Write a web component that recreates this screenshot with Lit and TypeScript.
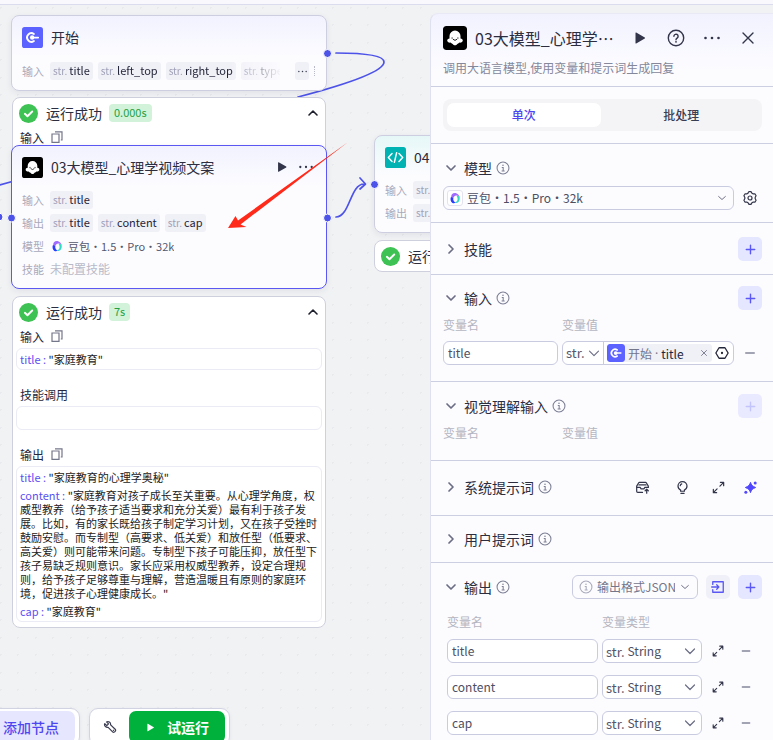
import { LitElement, html, svg, css, nothing } from "lit";
import { customElement, property } from "lit/decorators.js";

/* ---------- icons ---------- */
const startIcon = html`<svg class="ico-node" viewBox="0 0 24 24" aria-hidden="true">
  <rect width="24" height="24" rx="3" fill="#5c62ff" />
  <path d="M13.600 8A4.900 4.900 0 1 0 13.600 16" fill="none" stroke="#fff" stroke-width="2.200" stroke-linecap="round" />
  <circle cx="11.600" cy="12" r="2.500" fill="#fff" />
  <path d="M12 12h6.500" stroke="#fff" stroke-width="2" stroke-linecap="round" />
</svg>`;
const llmIcon = html`<svg class="ico-node" viewBox="0 0 24 24" aria-hidden="true">
  <rect width="24" height="24" rx="3" fill="#000" />
  <path d="M12 4.600a5.500 5.500 0 0 0-5.500 5.500v2.300c-1.400.1-2.300.9-2.300 2.100 0 1.400 1.500 2.300 3.300 2.100.5.700 1.300 1.100 2.200 1.300.5.900 1.300 1.400 2.300 1.400s1.800-.5 2.300-1.400c.9-.2 1.700-.6 2.200-1.300 1.800.2 3.300-.7 3.300-2.100 0-1.200-.9-2-2.300-2.100v-2.300A5.500 5.500 0 0 0 12 4.600z" fill="#fff" />
  <path d="M9.100 11.800v.5M14.900 11.800v.5M10.200 13.500q1.800 2 3.600 0" fill="none" stroke="#222" stroke-width="1" stroke-linecap="round" />
</svg>`;
const codeIcon = html`<svg class="ico-node" viewBox="0 0 24 24" aria-hidden="true">
  <rect width="24" height="24" rx="3" fill="#00b2b2" />
  <path d="M8 7.500 3.800 12 8 16.500M16 7.500l4.200 4.500-4.200 4.500M13.300 6.500l-2.600 11" fill="none" stroke="#fff" stroke-width="1.700" stroke-linecap="round" stroke-linejoin="round" />
</svg>`;
const doubaoIcon = html`<svg class="ico-model" viewBox="0 0 16 16" aria-hidden="true">
  <path d="M3 6C3 2.500 6 .6 9.500 1.600c2.800.8 4.500 3 4.800 6-1.300-2.300-3.300-3.300-5.200-2.800C6.200 5.500 5 8.500 5.400 12 3.400 10.800 2.800 8.500 3 6z" fill="#a06bff" />
  <path d="M2.600 6.500C1.400 9 2 13 4.500 14.500c1.600.9 3.500.5 4.700-.4C6.800 13.600 5.200 11 5.600 8z" fill="#2b3cff" />
  <path d="M14 6.500c1 3.500-.6 7.500-4.300 8-1 .1-1.800 0-2.500-.3 2.800-.6 4.300-2.600 4.300-4.900 0-1.500-.5-2.500-1.300-3.300C12 5 13.400 5.500 14 6.500z" fill="#2fd9c4" />
</svg>`;
const strokeIcon = (cls: string, d: string, w = 1.5) => html`<svg class=${cls} viewBox="0 0 16 16" aria-hidden="true">
  <path d=${d} fill="none" stroke="currentColor" stroke-width=${w} stroke-linecap="round" stroke-linejoin="round" /></svg>`;
const chevDown = strokeIcon("i16", "M4 6l4 4 4-4", 1.7);
const chevRight = strokeIcon("i16", "M6 4l4 4-4 4", 1.7);
const chevUp = strokeIcon("i16", "M4 10l4-4 4 4", 1.6);
const caret = strokeIcon("i16 caret", "M3.500 6l4.500 4.500L12.500 6", 1.2);
const caretSmall = strokeIcon("i12 caret", "M3.500 6l4.500 4 4.500-4", 1.3);
const plus = strokeIcon("i16", "M8 3.500v9M3.500 8h9", 1.5);
const minus = strokeIcon("i16 minus", "M3.800 8h8.400", 1.6);
const expand = strokeIcon("i16", "M9.500 6.500l4-4M10 2.500h3.500V6M6.500 9.500l-4 4M2.500 10v3.500H6", 1.3);
const close = strokeIcon("i16", "M3 3l10 10M13 3L3 13", 1.4);
const closeSmall = strokeIcon("i8", "M3 3l10 10M13 3L3 13", 1.8);
const play = html`<svg class="i16" viewBox="0 0 16 16" aria-hidden="true"><path d="M3.500 3v10q0 .8.700.4l8.600-4.900q.6-.5 0-1L4.200 2.600q-.7-.4-.7.400z" fill="currentColor" /></svg>`;
const dots = html`<svg class="i16" viewBox="0 0 16 16" aria-hidden="true"><g fill="currentColor"><circle cx="1.500" cy="8" r="1.300" /><circle cx="8" cy="8" r="1.300" /><circle cx="14.500" cy="8" r="1.300" /></g></svg>`;
const info = html`<svg class="info" viewBox="0 0 16 16" aria-hidden="true"><circle cx="8" cy="8" r="6.800" fill="none" stroke="currentColor" stroke-width="1.200" />
  <circle cx="8" cy="4.900" r=".9" fill="currentColor" /><path d="M6.600 7.400H8.200v4M6.400 11.400h3.500" fill="none" stroke="currentColor" stroke-width="1.200" /></svg>`;
const help = html`<svg class="i18" viewBox="0 0 18 18" aria-hidden="true"><circle cx="9" cy="9" r="7.700" fill="none" stroke="currentColor" stroke-width="1.400" />
  <path d="M6.900 7.300a2.100 2.100 0 1 1 3.200 1.800c-.8.500-1.100.8-1.100 1.600" fill="none" stroke="currentColor" stroke-width="1.400" stroke-linecap="round" /><circle cx="9" cy="12.800" r=".9" fill="currentColor" /></svg>`;
const gear = html`<svg class="i16" viewBox="0 0 16 16" aria-hidden="true"><path d="M6.300 2.300 7 1.600h2l.8 1.500 1.400.8 1.700-.1 1.200 1.900L13.200 7.200v1.600l.9 1.500-1.200 1.900-1.700-.1-1.400.8L9 14.400H7l-.8-1.500-1.400-.8-1.700.1-1.200-1.900.9-1.500V7.200L1.900 5.700l1.200-1.900 1.700.1 1.400-.8z" fill="none" stroke="currentColor" stroke-width="1.200" stroke-linejoin="round" /><circle cx="8" cy="8" r="2" fill="none" stroke="currentColor" stroke-width="1.200" /></svg>`;
const hexagon = html`<svg class="i14" viewBox="0 0 16 16" aria-hidden="true"><path d="M4.600 2h6.800l3.600 6-3.600 6H4.600L1 8z" fill="none" stroke="currentColor" stroke-width="1.500" stroke-linejoin="round" /><circle cx="8" cy="8" r="1.300" fill="currentColor" /></svg>`;
const library = html`<svg class="i16" viewBox="0 0 16 16" aria-hidden="true"><g fill="none" stroke="currentColor" stroke-width="1.300" stroke-linejoin="round" stroke-linecap="round"><path d="M8 13.300H3a1.200 1.200 0 0 1-1.200-1.200V6.500l2-3.300a1.200 1.200 0 0 1 1-.6h6.400a1.200 1.200 0 0 1 1 .6l2 3.300V8" /><path d="M4.200 5.200h7.600M2 7.800h3.500l1 1.600h3l1-1.600H14" /><path d="M12.500 14v-4M10.800 11.500l1.700-1.700 1.700 1.700" /></g></svg>`;
const bulb = html`<svg class="i16" viewBox="0 0 16 16" aria-hidden="true"><g fill="none" stroke="currentColor" stroke-width="1.300" stroke-linecap="round"><path d="M6 12v-1.200C4.400 10 3.200 8.500 3.200 6.500a4.800 4.800 0 0 1 9.600 0c0 2-1.200 3.500-2.800 4.300V12z" /><path d="M6.300 14.200h3.400M5.600 6a2.400 2.400 0 0 1 1.600-1.900" /></g></svg>`;
const sparkle = html`<svg class="i16" viewBox="0 0 16 16" aria-hidden="true"><path d="M8 2.500c.8 2.800 1.900 4 5.500 5.500-3.600 1.500-4.700 2.700-5.500 5.500C7.200 10.700 6.100 9.500 2.500 8 6.100 6.500 7.200 5.300 8 2.500z" fill="currentColor" stroke="currentColor" stroke-linejoin="round" /><circle cx="13" cy="3.300" r="1.600" fill="currentColor" /><circle cx="3" cy="13" r="1.600" fill="currentColor" /></svg>`;
const importIcon = strokeIcon("i14", "M2 5V2h12v12H2v-3M.8 8h8M6.500 5.500L9 8l-2.500 2.500", 1.5);
const wrench = html`<svg class="i14" viewBox="0 0 16 16" aria-hidden="true"><path d="M2 4.200 4.300 6.500 6.300 4.500 4 2.200C6.300 1 9 2.700 8.700 5.600l5.200 5c1.600 1.700-1.200 4.600-2.900 2.900L5.900 8.400C3.200 8.800 1 6.500 2 4.200zM11.500 11.500l1 .8" fill="none" stroke="currentColor" stroke-width="1.400" stroke-linejoin="round" /></svg>`;
const copy = html`<svg class="i12" viewBox="0 0 12 12" aria-hidden="true"><path d="M1 3h7v8.300H1zM4 .8h7V9H9.800" fill="none" stroke="currentColor" stroke-width="1.200" /></svg>`;
const check = html`<svg class="check" viewBox="0 0 20 20" aria-hidden="true"><circle cx="10" cy="10" r="10" fill="#3ec254" /><path d="M6.200 10.300l2.700 2.600 5-5" fill="none" stroke="#fff" stroke-width="2" stroke-linecap="round" stroke-linejoin="round" /></svg>`;

const base = css`
  * { box-sizing: border-box; }
  :host { font-family: "Noto Sans CJK SC", "Noto Sans", sans-serif; color: #3a3c50; }
  button, input, select { font: inherit; color: inherit; border: 0; padding: 0; margin: 0; background: none; min-width: 0; }
  button { display: flex; align-items: center; justify-content: center; cursor: pointer; }
  select { appearance: none; outline: 0; }
  svg { display: block; flex: none; }
  .i8 { width: 8px; height: 8px; }
  .i12 { width: 12px; height: 12px; }
  .i14 { width: 14px; height: 14px; }
  .i16 { width: 16px; height: 16px; }
  .i18 { width: 18px; height: 18px; }
  .str { font-family: "Liberation Sans Narrow", "Noto Sans CJK SC", sans-serif; }
`;

/* ---------- canvas cards ---------- */
@customElement("flow-node")
export class FlowNode extends LitElement {
  @property() heading = "";
  @property() kind = "start";
  @property({ type: Boolean }) actions = false;
  static styles = [base, css`
    :host { display: block; border: 1px solid #cdcee0; border-radius: 8px; padding: 9px 10px 0; background: linear-gradient(#f2f2ff, #fcfcff 40px); box-shadow: 0 2px 6px rgba(30, 32, 60, .08); }
    :host([selected]) { border-color: #5a57f2; }
    :host([kind="code"]) { background: linear-gradient(#e6f7f7, #fcfcff 40px); }
    .head { display: flex; align-items: center; gap: 8px; height: 24px; font-size: 14px; white-space: nowrap; color: #2c2e40; }
    .head .name { flex: 1; line-height: 22px; }
    .ico-node { width: 21px; height: 21px; }
    .acts { display: flex; gap: 10px; padding-right: 3px; color: #33354a; }
    .acts .i16 { width: 14px; height: 14px; }
  `];
  render() {
    const icon = this.kind === "llm" ? llmIcon : this.kind === "code" ? codeIcon : startIcon;
    return html`<div class="head">${icon}<span class="name">${this.heading}</span>
      ${this.actions ? html`<span class="acts"><button aria-label="运行">${play}</button><button aria-label="更多">${dots}</button></span>` : nothing}</div><slot></slot>`;
  }
}

@customElement("node-row")
export class NodeRow extends LitElement {
  @property() label = "";
  @property({ type: Array }) vars: string[] = [];
  @property({ type: Boolean }) more = false;
  static styles = [base, css`
    :host { display: flex; align-items: center; height: 18px; margin-bottom: 5px; font-size: 11px; line-height: 18px; white-space: nowrap; }
    .label { width: 28px; flex: none; color: #a9aabb; }
    .vars { display: flex; gap: 5px; min-width: 0; overflow: hidden; }
    .vars.fade { width: 230px; mask-image: linear-gradient(90deg, #000 180px, transparent 232px); }
    .chip { display: flex; gap: 2px; height: 18px; line-height: 17px; padding: 0 3px; border-radius: 3px; background: #f0f0f7; color: #24263a; flex: none; }
    .chip .str { color: #a0a1b8; font-size: 10px; }
    .more { margin-left: 15px; width: 14px; height: 18px; border-radius: 3px; background: #f0f0f7; }
    .more .i16 { width: 9px; height: 9px; }
    .rest { margin-left: 5px; height: 10px; border-left: 1px dotted #b9bac8; }
  `];
  render() {
    return html`<span class="label">${this.label}</span>
      <span class="vars ${this.more ? "fade" : ""}">${this.vars.map((v) => html`<span class="chip"><span class="str">str.</span>${v}</span>`)}<slot></slot></span>
      ${this.more ? html`<button class="more" aria-label="更多变量">${dots}</button><span class="rest"></span>` : nothing}`;
  }
}

@customElement("run-result")
export class RunResult extends LitElement {
  @property() time = "";
  @property({ type: Array }) parts: { name: string; copy: boolean; rows: [string, string][] }[] = [];
  static styles = [base, css`
    :host { display: block; border: 1px solid #cfd0de; border-radius: 8px; background: #fff; padding: 4px 3px 5px; }
    .head { display: flex; align-items: center; height: 22px; padding: 0 1px 0 3px; font-size: 14px; white-space: nowrap; color: #2c2e40; }
    .check { width: 19px; height: 19px; margin-right: 8px; }
    .time { margin-left: 7px; padding: 0 5px; height: 18px; border-radius: 4px; background: #d2f3d9; color: #1fa045; font-size: 11px; line-height: 17px; }
    .fold { margin-left: auto; color: #1d1f2c; }
    .part { display: flex; align-items: center; gap: 7px; height: 18px; margin: 15px 4px 3px; font-size: 12px; color: #24263a; }
    .head + .part { margin-top: 4px; }
    .part button { color: #74768a; }
    .box { display: flex; flex-direction: column; gap: 4px; min-height: 22px; border: 1px solid #ebebf5; border-radius: 6px; padding: 3px; font-size: 11px; line-height: 14px; color: #222; }
    .box.empty { height: 24px; }
    .key { color: #5a4ff3; }
  `];
  render() {
    return html`<div class="head">${check}<span>运行成功</span>
      ${this.time ? html`<span class="time">${this.time}</span><button class="fold" aria-label="收起">${chevUp}</button>` : nothing}</div>
      ${this.parts.map((p) => html`<div class="part"><span>${p.name}</span>${p.copy ? html`<button aria-label="复制">${copy}</button>` : nothing}</div>
        <div class="box ${p.rows.length ? "" : "empty"}">${p.rows.map(([k, v]) => html`<div><span class="key">${k} : </span>"${v}"</div>`)}</div>`)}`;
  }
}

/* ---------- side panel ---------- */
@customElement("config-panel")
export class ConfigPanel extends LitElement {
  static styles = [base, css`
    :host { display: block; border-left: 1px solid #e0e1f0; border-top: 1px solid #e8e9f4; border-top-left-radius: 8px; background: linear-gradient(#f2f2ff, #fcfcff 56px); font-size: 12px; white-space: nowrap; overflow: hidden; }
    header, section { border-bottom: 1px solid #cccfe2; padding: 12px 11px 12px 12px; }
    header { height: 73px; }
    .bar { display: flex; align-items: center; height: 24px; }
    .ico-node { width: 24px; height: 24px; border-radius: 3px; }
    h1 { flex: 1; margin: 0 12px 0 8px; font-size: 16px; font-weight: 400; line-height: 24px; color: #2c2e40; overflow: hidden; text-overflow: ellipsis; }
    .tools { display: flex; gap: 12px; margin-right: 2px; color: #33354a; }
    .tools button { width: 24px; height: 24px; }
    .desc { margin: 8px 0 0; line-height: 20px; color: #85879a; }
    .seg { display: grid; grid-template-columns: 1fr 1fr; gap: 4px; padding: 4px; height: 32px; border-radius: 8px; background: #f4f4f7; font-weight: 500; line-height: 22px; }
    .seg button { border-radius: 7px; }
    .seg .on { background: #fff; color: #4d46f0; }
    .title { display: flex; align-items: center; height: 24px; font-size: 14px; }
    .title h2 { margin: 0 4px 0 5px; font-size: 14px; line-height: 22px; font-weight: 400; color: #2c2e40; }
    .title .fold { width: 16px; color: #6b6d84; }
    .info { width: 14px; height: 14px; color: #7c7e94; }
    .acts { margin-left: auto; display: flex; gap: 8px; font-size: 12px; color: #33354a; }
    .acts button { width: 24px; }
    .acts .broad { width: 32px; }
    .acts .ai { color: #5147ff; }
    .acts .i16 { width: 15px; height: 15px; }
    .add { height: 24px; border-radius: 5px; background: #e5e6ff; color: #5a57f5; }
    .add:disabled { background: #e9eaff; color: #c3c4fb; }
    .import { height: 24px; border-radius: 5px; background: #f0f0f8; color: #5a57f5; }
    .field { display: flex; align-items: center; height: 24px; border: 1px solid #c9cbe0; border-radius: 6px; background: #fff; padding: 0 4px; min-width: 0; color: #4c4e62; }
    input.field { width: 100%; padding-bottom: 2px; }
    select { flex: 1; padding-bottom: 1px; }
    .caret { pointer-events: none; color: #6b6d84; }
    .icon { height: 24px; width: 24px; color: #33354a; }
    .minus { color: #85879a; }
    .str { font-size: 13px; color: #55576c; }
    .model { display: grid; grid-template-columns: 1fr 24px; gap: 4px; margin-top: 6px; }
    .model .field { gap: 4px; padding: 0 5px 0 3px; background: none; }
    .badge { display: flex; border: 1px solid #e3e3f0; border-radius: 3px; padding: 1px; background: #fff; }
    .ico-model { width: 12px; height: 12px; }
    .skill { padding: 14px 11px 13px 12px; }
    .inputs { padding: 11px 11px 16px 12px; }
    .vision { padding-bottom: 18px; }
    .system { padding: 14px 11px 16px 12px; }
    .user { padding: 11px 11px 11px 12px; }
    .cols { display: grid; grid-template-columns: 115px 1fr 24px; gap: 4px; }
    .names { margin-top: 6px; height: 18px; line-height: 18px; color: #b4b5c0; }
    .inputs .names { margin-bottom: 7px; }
    .value { padding: 0 3px; }
    .value select { flex: none; width: 19px; }
    .value .type { display: flex; align-items: center; justify-content: space-between; width: 34px; margin-right: 3px; }
    .split { width: 1px; height: 22px; background: #c9cbe0; margin-right: 3px; }
    .ref { flex: 1; display: flex; align-items: center; gap: 3px; height: 18px; margin-right: 2px; border-radius: 3px; background: #f0f0f7; padding-right: 4px; color: #74768a; min-width: 0; }
    .ref .ico-node { width: 18px; height: 18px; }
    .ref .sep { font-family: "Noto Sans", sans-serif; }
    .ref .var { color: #24263a; }
    .ref button { margin-left: auto; color: #74768a; }
    .value > button { width: 16px; color: #24263a; }
    .fmt { width: 126px; padding: 0 6px; gap: 4px; color: #74768a; background: none; }
    .fmt .info { color: #a9aabb; }
    .out { border-bottom: 0; }
    .out .cols { grid-template-columns: 1fr 100px 24px 24px; margin-left: 4px; margin-right: 4px; }
    .out .names { margin-top: 14px; margin-bottom: 8px; }
    .out .row { margin-bottom: 12px; }
    .out .row .icon .i16 { width: 14px; height: 14px; }
    .out .row .type { gap: 3px; padding: 0 3px; }
  `];
  sectionTitle(name: string, open: boolean, hasInfo: boolean, extra: unknown = nothing) {
    return html`<div class="title"><button class="fold" aria-label="展开或收起" aria-expanded=${open}>${open ? chevDown : chevRight}</button><h2>${name}</h2>${hasInfo ? info : nothing}${extra}</div>`;
  }
  render() {
    const add = html`<button class="add" aria-label="添加">${plus}</button>`;
    return html`
      <header>
        <div class="bar">${llmIcon}<h1>03大模型_心理学视频文案</h1>
          <div class="tools"><button aria-label="运行">${play}</button><button aria-label="帮助">${help}</button><button aria-label="更多">${dots}</button><button aria-label="关闭">${close}</button></div></div>
        <p class="desc">调用大语言模型,使用变量和提示词生成回复</p>
      </header>
      <section><div class="seg"><button class="on">单次</button><button>批处理</button></div></section>
      <section>${this.sectionTitle("模型", true, true)}
        <div class="model"><div class="field"><span class="badge">${doubaoIcon}</span><select aria-label="模型"><option>豆包・1.5・Pro・32k</option></select>${caretSmall}</div>
          <button class="icon" aria-label="模型设置">${gear}</button></div></section>
      <section class="skill">${this.sectionTitle("技能", false, false, html`<div class="acts">${add}</div>`)}</section>
      <section class="inputs">${this.sectionTitle("输入", true, true, html`<div class="acts">${add}</div>`)}
        <div class="cols names"><span>变量名</span><span>变量值</span></div>
        <div class="cols"><input class="field" aria-label="变量名" value="title" />
          <div class="field value"><span class="type"><select class="str" aria-label="变量类型"><option>str.</option></select>${strokeIcon("i12 caret", "M2 5.500l6 6 6-6", 1.5)}</span>
            <span class="split"></span><span class="ref">${startIcon}<span>开始</span><span class="sep">·</span><span class="var">title</span><button aria-label="清除">${closeSmall}</button></span><button aria-label="选择变量">${hexagon}</button></div>
          <button class="icon" aria-label="删除">${minus}</button></div></section>
      <section class="vision">${this.sectionTitle("视觉理解输入", true, true, html`<div class="acts"><button class="add" aria-label="添加" disabled>${plus}</button></div>`)}
        <div class="cols names"><span>变量名</span><span>变量值</span></div></section>
      <section class="system">${this.sectionTitle("系统提示词", false, true, html`<div class="acts"><button class="broad" aria-label="提示词库">${library}</button><button class="broad" aria-label="建议">${bulb}</button><button aria-label="放大">${expand}</button><button class="ai" aria-label="优化">${sparkle}</button></div>`)}</section>
      <section class="user">${this.sectionTitle("用户提示词", false, true)}</section>
      <section class="out">${this.sectionTitle("输出", true, true, html`<div class="acts"><div class="field fmt">${info}<select aria-label="输出格式"><option>输出格式JSON</option></select>${caretSmall}</div><button class="import" aria-label="导入">${importIcon}</button>${add}</div>`)}
        <div class="cols names"><span>变量名</span><span>变量类型</span></div>
        ${["title", "content", "cap"].map((v) => html`<div class="cols row"><input class="field" aria-label="变量名" value=${v} />
          <div class="field type"><span class="str">str.</span><select aria-label="变量类型"><option>String</option></select>${caret}</div>
          <button class="icon" aria-label="展开">${expand}</button><button class="icon" aria-label="删除">${minus}</button></div>`)}</section>`;
  }
}

/* ---------- page ---------- */
@customElement("app-root")
export class AppRoot extends LitElement {
  static styles = [base, css`
    :host { display: flex; flex-direction: column; height: 100vh; overflow: hidden; background: #f1f2f4; }
    .top { flex: none; height: 5px; background: #f8f8fd; border-bottom: 1px solid #dcdcef; }
    .work { flex: 1; display: flex; min-height: 0; }
    .canvas { flex: 1; position: relative; min-width: 0; overflow: hidden;
      background-image: radial-gradient(circle, #e9eaed 1px, transparent 1px), radial-gradient(circle, #e9eaed 1px, transparent 1px), radial-gradient(circle, #e9eaed 1px, transparent 1px), radial-gradient(circle, #e9eaed 1px, transparent 1px);
      background-size: 35px 35px; background-position: 0 2px, 18px 2px, 0 20px, 18px 20px; }
    config-panel { flex: none; width: 343px; margin-top: 8px; }
    .links, .n { position: absolute; }
    .links { left: 0; top: 0; width: 430px; height: 300px; }
    .n-start { left: 11px; top: 10px; width: 316px; height: 76px; }
    .r-start { left: 12px; top: 92px; width: 314px; }
    .n-llm { left: 11px; top: 140px; width: 316px; height: 144px; }
    .r-llm { left: 12px; top: 291px; width: 314px; }
    .n-code { left: 374px; top: 130px; width: 316px; height: 98px; }
    .r-code { left: 374px; top: 235px; width: 314px; height: 32px; }
    .first { margin-top: 12px; }
    .n-start .first { margin-top: 13px; }
    .ico-model { width: 12px; height: 12px; margin: 3px 5px 0 1px; }
    .model { display: flex; color: #55576c; }
    .none { color: #b9bac8; font-size: 12px; }
    .dock { position: absolute; left: -20px; bottom: -6px; display: flex; gap: 9px; }
    .group { display: flex; align-items: center; height: 38px; padding: 3px 4px; background: #fff; border: 1px solid #d2d3e2; border-radius: 9px; font-size: 14px; box-shadow: 0 1px 4px rgba(30, 32, 60, .06); }
    .group button { height: 32px; border-radius: 7px; white-space: nowrap; font-weight: 500; }
    .addnode { width: 90px; justify-content: flex-end; padding-right: 16px; background: #e6e7ff; color: #4f46f0; }
    .tool { width: 35px; padding-right: 4px; }
    .group .run { width: 96px; gap: 11px; background: #00b23c; color: #fff; font-weight: 700; }
    .run .i16 { width: 11px; height: 11px; }
  `];
  render() {
    return html`
      <div class="top"></div>
      <div class="work">
        <main class="canvas">
          <svg class="links" viewBox="0 5 430 300" aria-hidden="true"><g fill="none" stroke="#4d53e8" stroke-width="1.700" stroke-linecap="round" stroke-linejoin="round">
            <path d="M336 53C366 53 384 56 384 62C384 72 340 86 298 97" />
            <path d="M0 185L14 181" />
            <path d="M336 217C350 217 350 184 364 184M360 178l5.500 6-5.500 5" /></g></svg>
          <run-result class="n r-start" time="0.000s" .parts=${[{ name: "输入", copy: true, rows: [] }]}></run-result>
          <flow-node class="n n-start" kind="start" heading="开始">
            <node-row class="first" label="输入" more .vars=${["title", "left_top", "right_top", "type_text"]}></node-row>
          </flow-node>
          <flow-node class="n n-llm" kind="llm" heading="03大模型_心理学视频文案" selected actions>
            <node-row class="first" label="输入" .vars=${["title"]}></node-row>
            <node-row label="输出" .vars=${["title", "content", "cap"]}></node-row>
            <node-row label="模型"><span class="model">${doubaoIcon}豆包・1.5・Pro・32k</span></node-row>
            <node-row label="技能"><span class="none">未配置技能</span></node-row>
          </flow-node>
          <run-result class="n r-llm" time="7s" .parts=${[
            { name: "输入", copy: true, rows: [["title", "家庭教育"]] },
            { name: "技能调用", copy: false, rows: [] },
            { name: "输出", copy: true, rows: [
              ["title", "家庭教育的心理学奥秘"],
              ["content", "家庭教育对孩子成长至关重要。从心理学角度，权威型教养（给予孩子适当要求和充分关爱）最有利于孩子发展。比如，有的家长既给孩子制定学习计划，又在孩子受挫时鼓励安慰。而专制型（高要求、低关爱）和放任型（低要求、高关爱）则可能带来问题。专制型下孩子可能压抑，放任型下孩子易缺乏规则意识。家长应采用权威型教养，设定合理规则，给予孩子足够尊重与理解，营造温暖且有原则的家庭环境，促进孩子心理健康成长。"],
              ["cap", "家庭教育"]] }]}></run-result>
          <flow-node class="n n-code" kind="code" heading="04">
            <node-row class="first" label="输入" .vars=${["title"]}></node-row>
            <node-row label="输出" .vars=${["title"]}></node-row>
          </flow-node>
          <run-result class="n r-code"></run-result>
          <svg class="links" viewBox="0 5 430 300" aria-hidden="true">
            <g fill="#4d53e8" stroke="#fff" stroke-width="1">${[[327.5, 53.5], [11.5, 218], [327.5, 218], [374.5, 184.5], [-1, 217]].map(([x, y]) => svg`<circle cx=${x} cy=${y} r="4" />`)}</g>
            <path d="M228 228L235.500 216L238 220.500L347.500 142.500L240.500 224.500L246.500 227Z" fill="#ff2a1a" /></svg>
          <div class="dock">
            <div class="group"><button class="addnode">添加节点</button></div>
            <div class="group"><button class="tool" aria-label="调试">${wrench}</button><button class="run">${play}试运行</button></div>
          </div>
        </main>
        <config-panel></config-panel>
      </div>`;
  }
}
